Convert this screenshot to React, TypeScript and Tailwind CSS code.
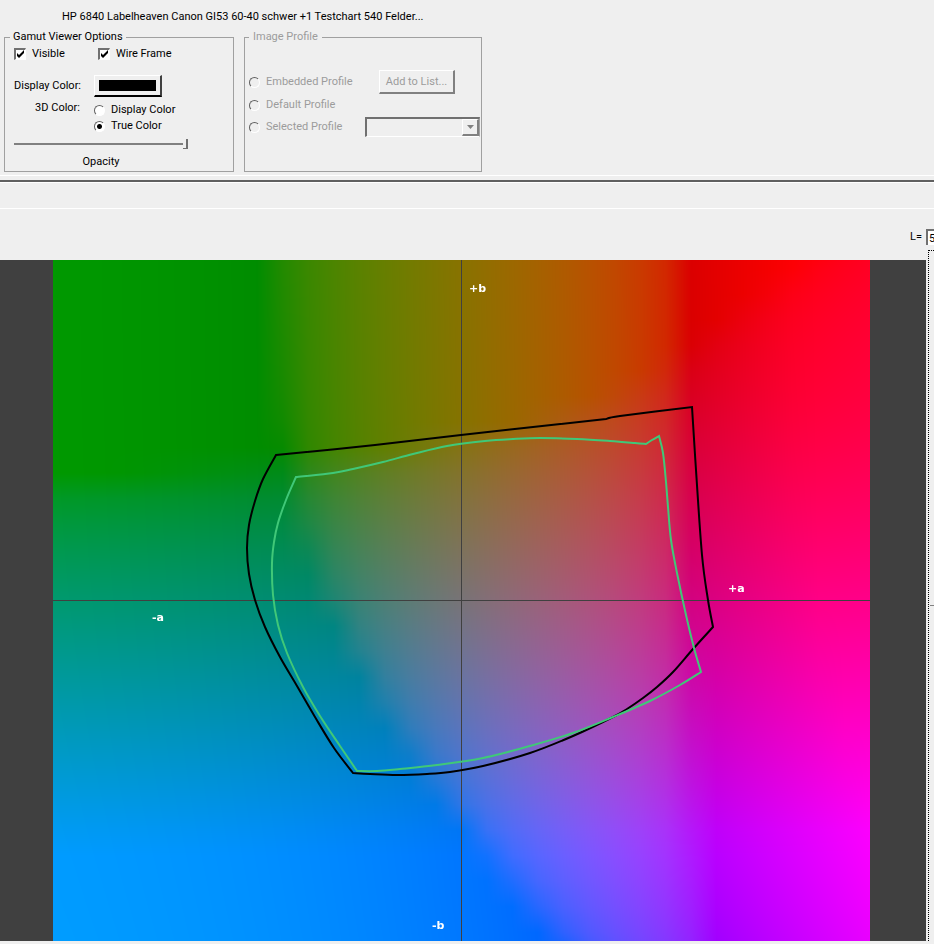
import { useLayoutEffect, useRef, useState } from 'react'

type Point = [number, number]

const PLOT_W = 817
const PLOT_H = 681
const CENTER_X = 408
const CENTER_Y = 340
const PX_PER_UNIT = 3.19
const LIGHTNESS = 50
const LUT_STEP = 8

// Each outline is a list of smooth edges that meet in hard corners
const BLACK_OUTLINE: Point[][] = [
  [[223, 195], [322, 185], [408, 175], [480, 167], [553, 159]],
  [[553, 159], [567, 156], [639, 147]],
  [[639, 147], [643, 210], [649, 295], [655, 340], [660, 367]],
  [[660, 367], [640, 389], [620, 412], [604, 427], [590, 438], [574, 449], [560, 457], [520, 476], [477, 493], [430, 506], [397, 512], [374, 514], [344, 515], [317, 514], [300, 513]],
  [[300, 513], [281, 488], [262, 457], [244, 426], [227, 397], [212, 367], [202, 340], [196, 314], [194, 288], [196, 265], [202, 241], [210, 219], [223, 195]],
]

const GREEN_OUTLINE: Point[][] = [
  [[243, 217], [280, 213], [300, 209], [330, 202], [360, 194], [394, 186], [432, 181], [460, 179], [487, 178], [524, 179], [557, 181], [582, 183], [593, 184]],
  [[593, 184], [599, 180], [606, 176]],
  [[606, 176], [610, 193], [613, 222], [615, 247], [618, 280], [624, 313], [633, 355], [641, 388], [648, 412]],
  [[648, 412], [627, 425], [597, 441], [560, 457], [520, 473], [477, 486], [430, 498], [384, 505], [347, 509], [324, 511], [304, 511]],
  [[304, 511], [287, 486], [267, 456], [250, 427], [234, 393], [225, 365], [220, 335], [219, 303], [221, 282], [225, 263], [233, 240], [243, 217]],
]

function toPath(edges: Point[][]) {
  let d = `M${edges[0][0][0]} ${edges[0][0][1]}`
  for (const pts of edges) {
    for (let i = 0; i < pts.length - 1; i++) {
      const p0 = pts[Math.max(i - 1, 0)]
      const p1 = pts[i]
      const p2 = pts[i + 1]
      const p3 = pts[Math.min(i + 2, pts.length - 1)]
      d += `C${p1[0] + (p2[0] - p0[0]) / 6} ${p1[1] + (p2[1] - p0[1]) / 6} ${p2[0] - (p3[0] - p1[0]) / 6} ${p2[1] - (p3[1] - p1[1]) / 6} ${p2[0]} ${p2[1]}`
    }
  }
  return d + 'Z'
}

// Lab to the RGB primaries of the display, clipped per channel
function labToRgb(l: number, a: number, b: number) {
  const inv = (t: number) => (t > 6 / 29 ? t * t * t : 3 * (6 / 29) ** 2 * (t - 4 / 29))
  const fy = (l + 16) / 116
  const x = 0.9505 * inv(fy + a / 500)
  const y = inv(fy)
  const z = 1.089 * inv(fy - b / 200)
  return [
    2.72 * x - 1.27 * y - 0.28 * z,
    -1.01 * x + 1.88 * y + 0.012 * z,
    0.185 * x - 0.365 * y + 1.09 * z,
  ].map((c) => {
    const v = Math.min(1, Math.max(0, c))
    return 255 * (v <= 0.0031308 ? 12.92 * v : 1.055 * v ** (1 / 2.4) - 0.055)
  })
}

function AbPlane() {
  const canvasRef = useRef<HTMLCanvasElement>(null)

  useLayoutEffect(() => {
    const ctx = canvasRef.current?.getContext('2d')
    if (!ctx) return
    const lut: number[][][] = []
    for (let j = 0; j <= 34; j++) {
      lut.push([])
      for (let i = 0; i <= 34; i++) {
        lut[j].push(labToRgb(LIGHTNESS, (i - 17) * LUT_STEP, (j - 17) * LUT_STEP))
      }
    }
    const image = ctx.createImageData(PLOT_W, PLOT_H)
    let k = 0
    for (let y = 0; y < PLOT_H; y++) {
      const v = (CENTER_Y - y) / PX_PER_UNIT / LUT_STEP + 17
      const j = Math.floor(v)
      const fv = v - j
      for (let x = 0; x < PLOT_W; x++) {
        const u = (x - CENTER_X) / PX_PER_UNIT / LUT_STEP + 17
        const i = Math.floor(u)
        const fu = u - i
        for (let c = 0; c < 3; c++) {
          const low = lut[j][i][c] * (1 - fu) + lut[j][i + 1][c] * fu
          const high = lut[j + 1][i][c] * (1 - fu) + lut[j + 1][i + 1][c] * fu
          image.data[k++] = low * (1 - fv) + high * fv
        }
        image.data[k++] = 255
      }
    }
    ctx.putImageData(image, 0, 0)
  }, [])

  return <canvas ref={canvasRef} width={PLOT_W} height={PLOT_H} className="block w-full" />
}

const radioClass =
  'size-[11px] shrink-0 appearance-none rounded-full border border-t-[#606060] border-l-[#606060] border-r-white border-b-white bg-white checked:bg-[radial-gradient(circle,#000_2px,#fff_3px)] disabled:bg-transparent'

function CheckBox({ label }: { label: string }) {
  const [checked, setChecked] = useState(true)
  return (
    <label className="flex w-[84px] items-center gap-1.5 whitespace-nowrap">
      <span className="relative size-3 shrink-0">
        <input
          type="checkbox"
          checked={checked}
          onChange={(e) => setChecked(e.target.checked)}
          className="block size-3 appearance-none border-t-2 border-l-2 border-r border-b border-t-[#707070] border-l-[#707070] border-r-white border-b-white bg-white"
        />
        {checked && (
          <svg viewBox="0 0 12 12" className="pointer-events-none absolute inset-0 size-3">
            <path d="M3 5v3l2 2 5-5V2L5 7z" fill="#000" />
          </svg>
        )}
      </span>
      {label}
    </label>
  )
}

function Radio({ label, name, checked, onChange, disabled }: { label: string; name: string; checked?: boolean; onChange?: () => void; disabled?: boolean }) {
  return (
    <label className="flex items-center gap-1.5 whitespace-nowrap">
      <input
        type="radio"
        name={name}
        checked={!!checked}
        onChange={() => onChange?.()}
        disabled={disabled}
        className={radioClass}
      />
      {label}
    </label>
  )
}

export default function App() {
  const [colorMode, setColorMode] = useState('true')
  const [opacity, setOpacity] = useState(100)

  return (
    <div className="min-h-screen overflow-x-hidden bg-[#efefef] pb-[3px] font-['Roboto','Liberation_Sans',sans-serif] text-[11px] leading-[14px] text-black">
      <header>
        <h1 className="h-[30px] pt-2.5 pl-[62px]">HP 6840 Labelheaven Canon GI53 60-40 schwer +1 Testchart 540 Felder...</h1>

        <div className="flex gap-2.5 pb-[3px] pl-1">
          <fieldset className="w-[230px] border border-[#a0a0a0] pb-0.5 pl-[9px]">
            <legend className="-ml-1 px-[3px]">Gamut Viewer Options</legend>
            <div className="flex h-5 items-center">
              <CheckBox label="Visible" />
              <CheckBox label="Wire Frame" />
            </div>
            <div className="mt-[11px] flex h-[22px] items-center gap-3.5">
              <label htmlFor="swatch" className="w-[66px] text-right whitespace-nowrap">
                Display Color:
              </label>
              <button id="swatch" className="h-[22px] w-[68px] border-t border-l border-r-2 border-b-2 border-t-white border-l-white border-r-[#404040] border-b-black p-1">
                <span className="block h-full bg-black" />
              </button>
            </div>
            <div className="mt-1 flex gap-3.5" role="radiogroup" aria-labelledby="color-mode">
              <span id="color-mode" className="w-[66px] text-right">
                3D Color:
              </span>
              <div className="flex flex-col gap-0.5 pt-0.5">
                <Radio name="mode" label="Display Color" checked={colorMode === 'display'} onChange={() => setColorMode('display')} />
                <Radio name="mode" label="True Color" checked={colorMode === 'true'} onChange={() => setColorMode('true')} />
              </div>
            </div>
            <div className="mt-[3px] flex w-[174px] flex-col items-center gap-[3px]">
              <input
                id="opacity"
                type="range"
                value={opacity}
                onChange={(e) => setOpacity(Number(e.target.value))}
                className="block h-4 w-full appearance-none bg-transparent [&::-webkit-slider-runnable-track]:h-0.5 [&::-webkit-slider-runnable-track]:bg-[#808080] [&::-webkit-slider-thumb]:-mt-1 [&::-webkit-slider-thumb]:h-[10px] [&::-webkit-slider-thumb]:w-[5px] [&::-webkit-slider-thumb]:appearance-none [&::-webkit-slider-thumb]:border-r-2 [&::-webkit-slider-thumb]:border-b [&::-webkit-slider-thumb]:border-[#707070] [&::-webkit-slider-thumb]:bg-[#efefef]"
              />
              <label htmlFor="opacity">Opacity</label>
            </div>
          </fieldset>

          <fieldset disabled className="w-[238px] border border-[#a0a0a0] pl-1 text-[#9c9c9c]">
            <legend className="px-1">Image Profile</legend>
            <div className="mt-[26px] flex h-6 items-center justify-between pr-[26px]">
              <Radio name="profile" label="Embedded Profile" disabled />
              <button className="h-6 w-[76px] border-t border-l border-r-2 border-b-2 border-t-white border-l-white border-r-[#808080] border-b-[#808080]">
                Add to List...
              </button>
            </div>
            <div className="flex h-[22px] items-center">
              <Radio name="profile" label="Default Profile" disabled />
            </div>
            <div className="flex h-[22px] items-center justify-between pr-px">
              <Radio name="profile" label="Selected Profile" disabled />
              <div className="relative h-5 w-[115px]">
                <select aria-label="Selected Profile" className="block h-5 w-full appearance-none border-t-2 border-l-2 border-r border-b border-t-[#707070] border-l-[#707070] border-r-[#a0a0a0] border-b-white" />
                <span className="pointer-events-none absolute top-0.5 right-px flex h-[17px] w-[17px] items-center justify-center border-r-2 border-b-2 border-t border-l border-t-white border-l-white border-r-[#808080] border-b-[#808080]">
                  <svg viewBox="0 0 7 4" className="w-[7px]">
                    <path d="M0 0h7L3.5 4z" fill="#808080" />
                  </svg>
                </span>
              </div>
            </div>
          </fieldset>
        </div>
        <div className="h-[5px] border-t border-white" />
        <div className="h-[29px] border-t-2 border-b border-t-[#606060] border-b-white">
          <div className="border-t border-white" />
        </div>
      </header>

      <div className="flex h-[41px] items-start justify-end gap-1 pt-5">
        <label htmlFor="lightness" className="pt-px">
          L=
        </label>
        <input
          id="lightness"
          defaultValue="50"
          className="h-4 w-2 rounded-none border-t-2 border-l-2 border-[#707070] bg-white pl-px"
        />
      </div>

      <main className="flex">
        <div className="mt-2.5 min-w-0 flex-1 bg-[#404040] pr-14 pl-[53px]">
          <div className="relative">
            <AbPlane />
            <svg viewBox={`0 0 ${PLOT_W} ${PLOT_H}`} className="absolute inset-0 size-full">
              <g stroke="#404040" shapeRendering="crispEdges">
                <path d="M0 340.5h817M408.5 0v681" />
              </g>
              <g fill="none" strokeWidth="2">
                <path d={toPath(BLACK_OUTLINE)} stroke="#000" />
                <path d={toPath(GREEN_OUTLINE)} stroke="#40c878" />
              </g>
              <g className="fill-white font-['DejaVu_Sans',sans-serif] text-[11px] font-bold">
                <text x="416" y="32">+b</text>
                <text x="675" y="332">+a</text>
                <text x="99" y="361">-a</text>
                <text x="379" y="669">-b</text>
              </g>
            </svg>
          </div>
        </div>
        <aside className="ml-0.5 flex w-1.5 items-center border-t border-l border-dotted border-black pt-[19px] pl-px">
          <hr className="w-full border-t border-[#808080]" />
        </aside>
      </main>
    </div>
  )
}
